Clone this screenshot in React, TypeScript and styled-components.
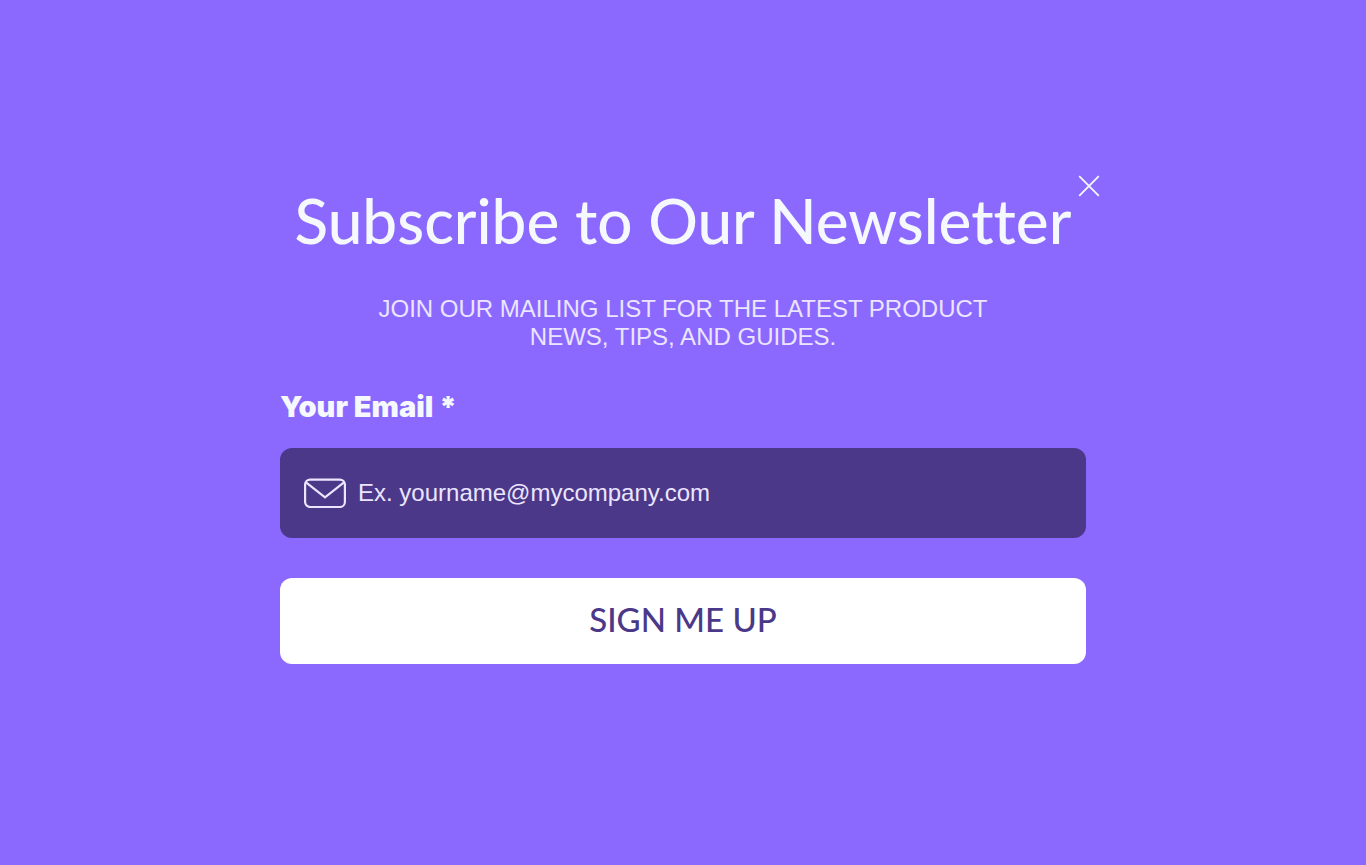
import { useState } from "react";
import styled, { createGlobalStyle } from "styled-components";

const colors = {
  page: "#8b69ff",
  field: "#4b3889",
  heading: "#f5f8fc",
  soft: "#ebe5ff",
  white: "#ffffff",
};

const display = `Lato, "Open Sans", sans-serif`;
const heavy = `Inter, "Open Sans", sans-serif`;
const body = `"Liberation Sans", Arial, sans-serif`;

const GlobalStyle = createGlobalStyle`
  *, *::before, *::after { box-sizing: border-box; }
  body { margin: 0; background: ${colors.page}; font-family: ${body}; }
`;

const Page = styled.main`
  min-height: 100vh;
  display: flex;
  align-items: center;
  justify-content: center;
  padding: 24px;
`;

const Panel = styled.section`
  position: relative;
  width: 100%;
  max-width: 806px;
  padding: 10px 0 27px;
`;

const CloseButton = styled.button`
  position: absolute;
  top: 0;
  right: -14px;
  display: flex;
  padding: 0;
  border: 0;
  background: none;
  color: ${colors.heading};
  cursor: pointer;
`;

const Title = styled.h1`
  margin: 0;
  font: 500 62px/70px ${display};
  font-variant-ligatures: none;
  color: ${colors.heading};
  text-align: center;
`;

const Lead = styled.p`
  max-width: 640px;
  margin: 40px auto 0;
  font: 400 24px/28px ${body};
  color: ${colors.soft};
  text-align: center;
  text-transform: uppercase;
`;

const Form = styled.form`
  display: flex;
  flex-direction: column;
  margin-top: 36px;
`;

const Label = styled.label`
  font: 900 29px/40px ${heavy};
  color: ${colors.heading};
`;

const Field = styled.div`
  display: flex;
  align-items: center;
  gap: 12px;
  height: 90px;
  margin-top: 21px;
  padding: 0 24px;
  border-radius: 12px;
  background: ${colors.field};
  color: ${colors.soft};
`;

const EmailInput = styled.input`
  flex: 1;
  min-width: 0;
  padding: 0;
  border: 0;
  outline: 0;
  background: none;
  font: 400 24px/32px ${body};
  color: ${colors.soft};

  &::placeholder {
    color: ${colors.soft};
    opacity: 1;
  }
`;

const SubmitButton = styled.button`
  height: 86px;
  margin-top: 40px;
  padding: 0 0 4px;
  border: 0;
  border-radius: 12px;
  background: ${colors.white};
  font: 500 33px/40px ${display};
  color: ${colors.field};
  text-transform: uppercase;
  cursor: pointer;
`;

const CloseIcon = () => (
  <svg width="22" height="22" viewBox="0 0 22 22" fill="none" stroke="currentColor" strokeWidth="1.8" aria-hidden="true">
    <path d="M1.2 1.2 20.8 20.8M20.8 1.2 1.2 20.8" />
  </svg>
);

const MailIcon = () => (
  <svg width="42" height="30" viewBox="0 0 42 30" fill="none" stroke="currentColor" strokeWidth="2.2" aria-hidden="true">
    <rect x="1.1" y="1.6" width="39.8" height="27.4" rx="5" />
    <path d="M2 4.3 21 19.3 40 4.3" />
  </svg>
);

export default function App() {
  const [email, setEmail] = useState("");

  return (
    <>
      <GlobalStyle />
      <Page>
        <Panel aria-labelledby="newsletter-title">
          <CloseButton type="button" aria-label="Close">
            <CloseIcon />
          </CloseButton>
          <Title id="newsletter-title">Subscribe to Our Newsletter</Title>
          <Lead>Join our mailing list for the latest product news, tips, and guides.</Lead>
          <Form onSubmit={(event) => event.preventDefault()}>
            <Label htmlFor="email">Your Email *</Label>
            <Field>
              <MailIcon />
              <EmailInput
                id="email"
                type="email"
                required
                placeholder="Ex. yourname@mycompany.com"
                value={email}
                onChange={(event) => setEmail(event.target.value)}
              />
            </Field>
            <SubmitButton type="submit">Sign me up</SubmitButton>
          </Form>
        </Panel>
      </Page>
    </>
  );
}
